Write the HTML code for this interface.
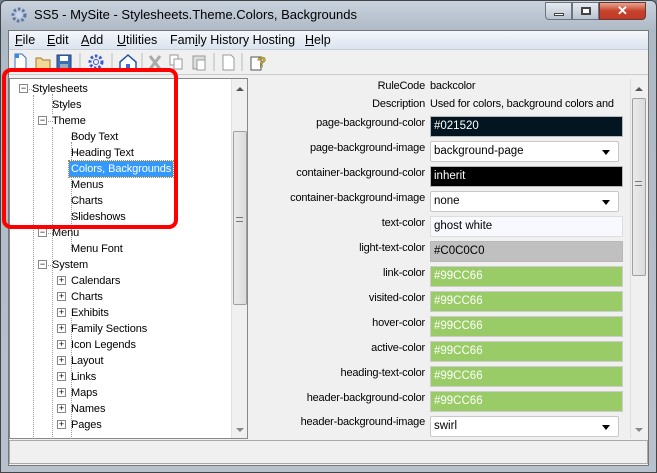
<!DOCTYPE html><html><head><style>
*{margin:0;padding:0;box-sizing:border-box}
body{width:657px;height:473px;overflow:hidden;background:#6e7f93;font-family:"Liberation Sans",sans-serif;font-size:11px;color:#000;position:relative}
.abs{position:absolute}
.win{left:0;top:0;width:657px;height:473px;background:linear-gradient(#c9d3de,#aeb9c6 30px,#b8c2ce);border:1px solid #444;border-radius:6px 6px 0 0}
.title{left:34px;top:7px;font-size:13px;color:#000}
.client{left:8px;top:30px;width:641px;height:436px;background:#f0f0f0;border:1px solid #777}
.menu{left:9px;top:31px;width:639px;height:19px;background:linear-gradient(#f4f7fc,#dbe3ef);border-bottom:1px solid #c8d0dc}
.menu span{position:absolute;top:2px;font-size:12.5px}
.tree{left:9px;top:78px;width:239px;height:361px;background:#fff;border:1px solid #888}
.t{position:absolute;font-size:11px;letter-spacing:-0.1px;white-space:nowrap;line-height:14px}
.box{position:absolute;width:9px;height:9px;border:1px solid #888;background:#fff;font-size:9px;line-height:7px;text-align:center;color:#000}
.vl{position:absolute;border-left:1px dotted #999}
.hl{position:absolute;border-top:1px dotted #999;height:0}
.sb{position:absolute;background:#f0f0f0;border-left:1px solid #e0e0e0}
.thumb{position:absolute;background:linear-gradient(90deg,#eaeaea,#dcdcdc);border:1px solid #a0a0a0;border-radius:2px}
.lbl{position:absolute;right:232px;text-align:right;white-space:nowrap;font-size:11px;letter-spacing:-0.2px}
.fld{position:absolute;left:430px;width:193px;height:21px;border:1px solid #b8b8b8;padding:3px 3px;font-size:11.5px;white-space:nowrap}
.sel{width:189px;background:#fff;border-color:#c8c8c8;border-radius:2px}
.sel:after{content:"";position:absolute;right:8px;top:8px;border:4px solid transparent;border-top:5px solid #000}
.g{background:#99cc66;color:#fff;border-color:#ccc}
</style></head><body>
<div class="abs win"></div>
<svg class="abs" style="left:10px;top:6px" width="18" height="18"><circle cx="9" cy="9" r="6" fill="none" stroke="#5a74a8" stroke-width="3" stroke-dasharray="2.5 2"/><circle cx="9" cy="9" r="3" fill="#c8d4ee"/></svg>
<div class="abs title">SS5 - MySite - Stylesheets.Theme.Colors, Backgrounds</div>
<div class="abs" style="left:545px;top:2px;width:27px;height:18px;border:1px solid #6a7482;border-radius:0 0 0 4px;background:linear-gradient(#e6ebf1,#b9c3cf)"><div class="abs" style="left:8px;top:10px;width:10px;height:3px;background:#fff;border:1px solid #444"></div></div>
<div class="abs" style="left:572px;top:2px;width:27px;height:18px;border:1px solid #6a7482;background:linear-gradient(#e6ebf1,#b9c3cf)"><div class="abs" style="left:8px;top:4px;width:10px;height:8px;border:2px solid #444;background:#fff"></div></div>
<div class="abs" style="left:599px;top:2px;width:47px;height:18px;border:1px solid #6a3a30;border-radius:0 0 4px 0;background:linear-gradient(#e8a493,#c7432a 50%,#c0392a);color:#fff;text-align:center;font-weight:bold;font-size:13px;line-height:16px">✕</div>
<div class="abs client"></div>
<div class="abs menu"><span style="left:6px"><u>F</u>ile</span><span style="left:38px"><u>E</u>dit</span><span style="left:72px"><u>A</u>dd</span><span style="left:108px"><u>U</u>tilities</span><span style="left:161px">Fam<u>i</u>ly History Hosting</span><span style="left:296px"><u>H</u>elp</span></div>
<svg class="abs" style="left:10px;top:52px" width="270" height="20">
<path d="M5 2h7l4 4v12H5z" fill="#fff" stroke="#3a6fb0"/><path d="M5 2h4v4H5z" fill="#3a8be0"/>
<path d="M26 6h5l2 2h7v10H26z" fill="#f3d795" stroke="#a07a30"/>
<rect x="47" y="3" width="14" height="15" fill="#3d6fb8" stroke="#1f3f78"/><rect x="50" y="4" width="8" height="5" fill="#fff"/><rect x="50" y="12" width="8" height="5" fill="#9ab"/>
<line x1="70" y1="1" x2="70" y2="19" stroke="#bbb"/>
<circle cx="86" cy="10" r="6" fill="none" stroke="#3a5ad0" stroke-width="3" stroke-dasharray="2.5 2"/><circle cx="86" cy="10" r="2.5" fill="none" stroke="#3a5ad0"/>
<line x1="102" y1="1" x2="102" y2="19" stroke="#bbb"/>
<path d="M110 10l8-7 8 7v8h-16z" fill="#fff" stroke="#2a5aa0" stroke-width="1.5"/><rect x="116" y="12" width="4" height="6" fill="#3a6fd0"/>
<line x1="132" y1="1" x2="132" y2="19" stroke="#bbb"/>
<path d="M140 4l10 13M150 4l-10 13" stroke="#aaa" stroke-width="3"/>
<rect x="160" y="3" width="8" height="10" fill="#fff" stroke="#999"/><rect x="164" y="7" width="8" height="10" fill="#fff" stroke="#999"/>
<rect x="183" y="4" width="12" height="13" fill="#ddd" stroke="#999"/><rect x="187" y="8" width="8" height="10" fill="#fff" stroke="#999"/>
<line x1="204" y1="1" x2="204" y2="19" stroke="#bbb"/>
<path d="M213 3h8l3 3v12h-11z" fill="#fff" stroke="#999"/>
<line x1="232" y1="1" x2="232" y2="19" stroke="#bbb"/>
<rect x="241" y="5" width="10" height="13" fill="#fff" stroke="#555"/><text x="247" y="15" font-size="15" font-weight="bold" fill="#e8c000" stroke="#555" stroke-width=".5" font-family="Liberation Sans">?</text>
</svg>
<div class="abs" style="left:9px;top:74px;width:639px;height:1px;background:#ccc"></div>
<div class="abs tree">
<div class="vl" style="left:23px;top:16px;height:344px"></div>
<div class="vl" style="left:42px;top:48px;height:312px"></div>
<div class="vl" style="left:61px;top:63px;height:108px"></div>
<div class="vl" style="left:61px;top:239px;height:121px"></div>
<div class="vl" style="left:42px;top:15px;height:20px"></div>
</div>
<div class="abs" style="left:9px;top:78px;width:239px;height:361px">
<div class="box" style="left:10px;top:6px">−</div><div class="hl" style="left:20px;top:11px;width:5px"></div><div class="t" style="left:23px;top:4px">Stylesheets</div>
<div class="hl" style="left:43px;top:27px;width:13px"></div><div class="t" style="left:43px;top:20px">Styles</div>
<div class="box" style="left:29px;top:38px">−</div><div class="hl" style="left:39px;top:43px;width:5px"></div><div class="t" style="left:43px;top:36px">Theme</div>
<div class="hl" style="left:62px;top:59px;width:8px"></div><div class="t" style="left:62px;top:52px">Body Text</div>
<div class="hl" style="left:62px;top:75px;width:8px"></div><div class="t" style="left:62px;top:68px">Heading Text</div>
<div class="hl" style="left:62px;top:91px;width:8px"></div><div class="t" style="left:60px;top:83px;background:#3399ff;color:#fff;padding:1px 2px;outline:1px dotted #c80">Colors, Backgrounds</div>
<div class="hl" style="left:62px;top:107px;width:8px"></div><div class="t" style="left:62px;top:100px">Menus</div>
<div class="hl" style="left:62px;top:123px;width:8px"></div><div class="t" style="left:62px;top:116px">Charts</div>
<div class="hl" style="left:62px;top:139px;width:8px"></div><div class="t" style="left:62px;top:132px">Slideshows</div>
<div class="box" style="left:29px;top:150px">−</div><div class="hl" style="left:39px;top:155px;width:5px"></div><div class="t" style="left:43px;top:148px">Menu</div>
<div class="hl" style="left:62px;top:171px;width:8px"></div><div class="t" style="left:62px;top:164px">Menu Font</div>
<div class="box" style="left:29px;top:182px">−</div><div class="hl" style="left:39px;top:187px;width:5px"></div><div class="t" style="left:43px;top:180px">System</div>
<div class="box" style="left:48px;top:198px">+</div><div class="t" style="left:62px;top:196px">Calendars</div>
<div class="box" style="left:48px;top:214px">+</div><div class="t" style="left:62px;top:212px">Charts</div>
<div class="box" style="left:48px;top:230px">+</div><div class="t" style="left:62px;top:228px">Exhibits</div>
<div class="box" style="left:48px;top:246px">+</div><div class="t" style="left:62px;top:244px">Family Sections</div>
<div class="box" style="left:48px;top:262px">+</div><div class="t" style="left:62px;top:260px">Icon Legends</div>
<div class="box" style="left:48px;top:278px">+</div><div class="t" style="left:62px;top:276px">Layout</div>
<div class="box" style="left:48px;top:294px">+</div><div class="t" style="left:62px;top:292px">Links</div>
<div class="box" style="left:48px;top:310px">+</div><div class="t" style="left:62px;top:308px">Maps</div>
<div class="box" style="left:48px;top:326px">+</div><div class="t" style="left:62px;top:324px">Names</div>
<div class="box" style="left:48px;top:342px">+</div><div class="t" style="left:62px;top:340px">Pages</div>
</div>
<div class="sb" style="left:231px;top:79px;width:16px;height:359px"><div class="abs" style="left:4px;top:8px;border:4px solid transparent;border-bottom:4px solid #555;border-top:0"></div><div class="thumb" style="left:1px;top:52px;width:14px;height:174px"></div><div class="abs" style="left:4px;top:138px;width:7px;height:5px;border-top:1px solid #777;border-bottom:1px solid #777"></div><div class="abs" style="left:4px;top:349px;border:4px solid transparent;border-top:4px solid #888;border-bottom:0"></div></div>
<div class="abs" style="left:9px;top:440px;width:639px;height:24px;border:1px solid #aaa;background:#f0f0f0"></div>
<div class="lbl" style="top:80px">RuleCode</div><div class="abs" style="left:430px;top:80px;letter-spacing:-0.2px">backcolor</div>
<div class="lbl" style="top:98px">Description</div><div class="abs" style="left:430px;top:98px;width:187px;overflow:hidden;white-space:nowrap;letter-spacing:-0.2px">Used for colors, background colors and</div>
<div class="lbl" style="top:117px">page-background-color</div><div class="fld" style="top:116px;background:#021520;color:#fff">#021520</div>
<div class="lbl" style="top:142px">page-background-image</div><div class="fld sel" style="top:141px">background-page</div>
<div class="lbl" style="top:167px">container-background-color</div><div class="fld" style="top:166px;background:#000;color:#fff">inherit</div>
<div class="lbl" style="top:192px">container-background-image</div><div class="fld sel" style="top:191px">none</div>
<div class="lbl" style="top:217px">text-color</div><div class="fld" style="top:216px;background:#f8f8ff;border-color:#ddd">ghost white</div>
<div class="lbl" style="top:242px">light-text-color</div><div class="fld" style="top:241px;background:#c0c0c0">#C0C0C0</div>
<div class="lbl" style="top:267px">link-color</div><div class="fld g" style="top:266px">#99CC66</div>
<div class="lbl" style="top:292px">visited-color</div><div class="fld g" style="top:291px">#99CC66</div>
<div class="lbl" style="top:317px">hover-color</div><div class="fld g" style="top:316px">#99CC66</div>
<div class="lbl" style="top:342px">active-color</div><div class="fld g" style="top:341px">#99CC66</div>
<div class="lbl" style="top:367px">heading-text-color</div><div class="fld g" style="top:366px">#99CC66</div>
<div class="lbl" style="top:392px">header-background-color</div><div class="fld g" style="top:391px">#99CC66</div>
<div class="lbl" style="top:416px">header-background-image</div><div class="fld sel" style="top:416px">swirl</div>
<div class="sb" style="left:630px;top:79px;width:16px;height:359px;border-left:1px solid #ddd"><div class="abs" style="left:4px;top:8px;border:4px solid transparent;border-bottom:4px solid #555;border-top:0"></div><div class="thumb" style="left:1px;top:19px;width:14px;height:178px"></div><div class="abs" style="left:4px;top:102px;width:7px;height:5px;border-top:1px solid #777;border-bottom:1px solid #777"></div><div class="abs" style="left:4px;top:349px;border:4px solid transparent;border-top:4px solid #888;border-bottom:0"></div></div>
<div class="abs" style="left:2px;top:68px;width:176px;height:161px;border:4px solid #f00;border-radius:9px"></div>
</body></html>
